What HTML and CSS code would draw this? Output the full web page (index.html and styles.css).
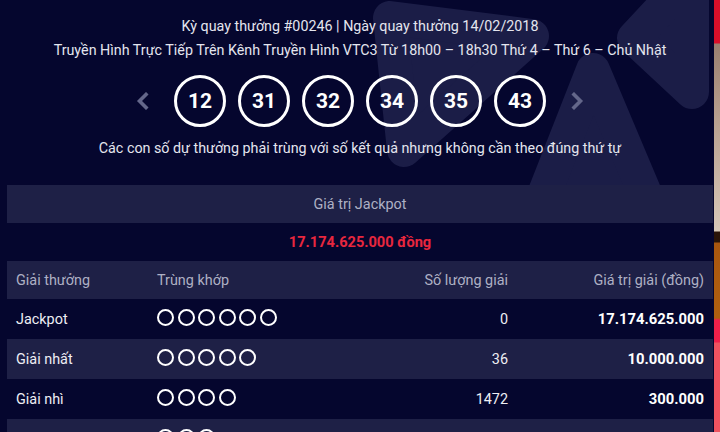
FILE: index.html
```html
<!DOCTYPE html>
<html lang="vi">
<head>
<meta charset="utf-8">
<title>Kết quả Mega 6/45 #00246</title>
<link rel="stylesheet" href="styles.css">
</head>
<body>
<div class="page">
  <header class="draw">
    <svg class="bg-shapes" width="720" height="185" viewBox="0 0 720 185" aria-hidden="true">
      <g fill="#1b1d47" stroke="#1b1d47" stroke-width="34" stroke-linejoin="round">
        <polygon points="390,18 532,36 404,150"/>
        <polygon points="593,70 538,210 652,210"/>
        <polygon points="634,38 692,-24 692,92"/>
      </g>
    </svg>
    <p class="draw-title">Kỳ quay thưởng #00246 | Ngày quay thưởng 14/02/2018</p>
    <p class="draw-schedule">Truyền Hình Trực Tiếp Trên Kênh Truyền Hình VTC3 Từ 18h00 – 18h30 Thứ 4 – Thứ 6 – Chủ Nhật</p>
    <div class="balls">
      <span class="arrow arrow-prev"><svg width="14" height="18" viewBox="0 0 14 18"><path d="M11 2.5 L4.5 9 L11 15.5" fill="none" stroke="#64678a" stroke-width="3.6" stroke-linecap="square"/></svg></span>
      <span class="ball">12</span>
      <span class="ball">31</span>
      <span class="ball">32</span>
      <span class="ball">34</span>
      <span class="ball">35</span>
      <span class="ball">43</span>
      <span class="arrow arrow-next"><svg width="14" height="18" viewBox="0 0 14 18"><path d="M3 2.5 L9.5 9 L3 15.5" fill="none" stroke="#64678a" stroke-width="3.6" stroke-linecap="square"/></svg></span>
    </div>
    <p class="draw-note">Các con số dự thưởng phải trùng với số kết quả nhưng không cần theo đúng thứ tự</p>
  </header>

  <section class="results">
    <div class="jackpot-label">Giá trị Jackpot</div>
    <div class="jackpot-value">17.174.625.000 đồng</div>
    <div class="prize-table">
      <div class="row row-head">
        <span>Giải thưởng</span>
        <span>Trùng khớp</span>
        <span class="num">Số lượng giải</span>
        <span class="num">Giá trị giải (đồng)</span>
      </div>
      <div class="row">
        <span>Jackpot</span>
        <span class="dots"><i></i><i></i><i></i><i></i><i></i><i></i></span>
        <span class="num">0</span>
        <span class="num val">17.174.625.000</span>
      </div>
      <div class="row row-alt">
        <span>Giải nhất</span>
        <span class="dots"><i></i><i></i><i></i><i></i><i></i></span>
        <span class="num">36</span>
        <span class="num val">10.000.000</span>
      </div>
      <div class="row">
        <span>Giải nhì</span>
        <span class="dots"><i></i><i></i><i></i><i></i></span>
        <span class="num">1472</span>
        <span class="num val">300.000</span>
      </div>
      <div class="row row-alt">
        <span></span>
        <span class="dots"><i></i><i></i><i></i></span>
        <span class="num"></span>
        <span class="num val"></span>
      </div>
    </div>
  </section>

  <div class="side-strip"></div>
</div>
</body>
</html>
```

FILE: styles.css
```css
* { box-sizing: border-box; }

html, body {
  margin: 0;
  padding: 0;
}

body {
  width: 720px;
  height: 432px;
  overflow: hidden;
  background: #05062e;
  font-family: Roboto, "Noto Sans", "Liberation Sans", sans-serif;
  color: #e4e5ee;
}

.page {
  position: relative;
  width: 720px;
  height: 432px;
  overflow: hidden;
}

.draw {
  position: relative;
  padding-top: 14px;
  text-align: center;
}

.bg-shapes {
  position: absolute;
  left: 0;
  top: 0;
  z-index: 0;
}

.draw > p,
.draw > .balls {
  position: relative;
  z-index: 1;
}

.draw p {
  margin: 0;
  font-size: 14.3px;
  line-height: 24px;
}

.balls {
  display: flex;
  justify-content: center;
  align-items: center;
  gap: 12px;
  margin-top: 13px;
}

.arrow {
  display: flex;
  width: 14px;
  height: 18px;
}

.arrow-prev { margin-right: 13px; }
.arrow-next { margin-left: 13px; }

.ball {
  display: flex;
  align-items: center;
  justify-content: center;
  width: 52px;
  height: 52px;
  border: 3px solid #ffffff;
  border-radius: 50%;
  font-size: 21px;
  font-weight: 700;
  color: #ffffff;
}

.draw .draw-note {
  margin-top: 9px;
}

.results {
  margin: 25px 7px 0;
}

.jackpot-label {
  height: 38px;
  display: flex;
  align-items: center;
  justify-content: center;
  background: #1e2046;
  color: #aeb0c4;
  font-size: 14.4px;
}

.jackpot-value {
  height: 38px;
  display: flex;
  align-items: center;
  justify-content: center;
  color: #e8273e;
  font-size: 14.6px;
  font-weight: 700;
}

.row {
  display: grid;
  grid-template-columns: 141px 1fr 130px 196px;
  align-items: center;
  height: 40px;
  padding: 0 9px;
  font-size: 14.4px;
  color: #eeeef4;
}

.row-head {
  height: 38px;
  background: #1e2046;
  color: #aeb0c4;
}

.row-alt {
  background: #1e2046;
}

.num {
  text-align: right;
}

.val {
  font-weight: 700;
  font-size: 14.8px;
  color: #ffffff;
}

.dots {
  display: flex;
  gap: 3.6px;
  margin-top: -4px;
}

.dots i {
  display: block;
  width: 17px;
  height: 17px;
  border: 2.4px solid #ffffff;
  border-radius: 50%;
}

.side-strip {
  position: absolute;
  right: 0;
  top: 0;
  width: 6px;
  height: 432px;
  background: linear-gradient(
    to bottom,
    #d90f2a 0,
    #d90f2a 43px,
    #9a7f70 44px,
    #b8a08f 120px,
    #d6c6b6 225px,
    #d8cab9 231px,
    #2a1408 232px,
    #2a1408 242px,
    #a9560f 243px,
    #b0600f 318px,
    #f0204a 320px,
    #f0204a 342px,
    #ef5360 343px,
    #ef5360 432px
  );
}
```
